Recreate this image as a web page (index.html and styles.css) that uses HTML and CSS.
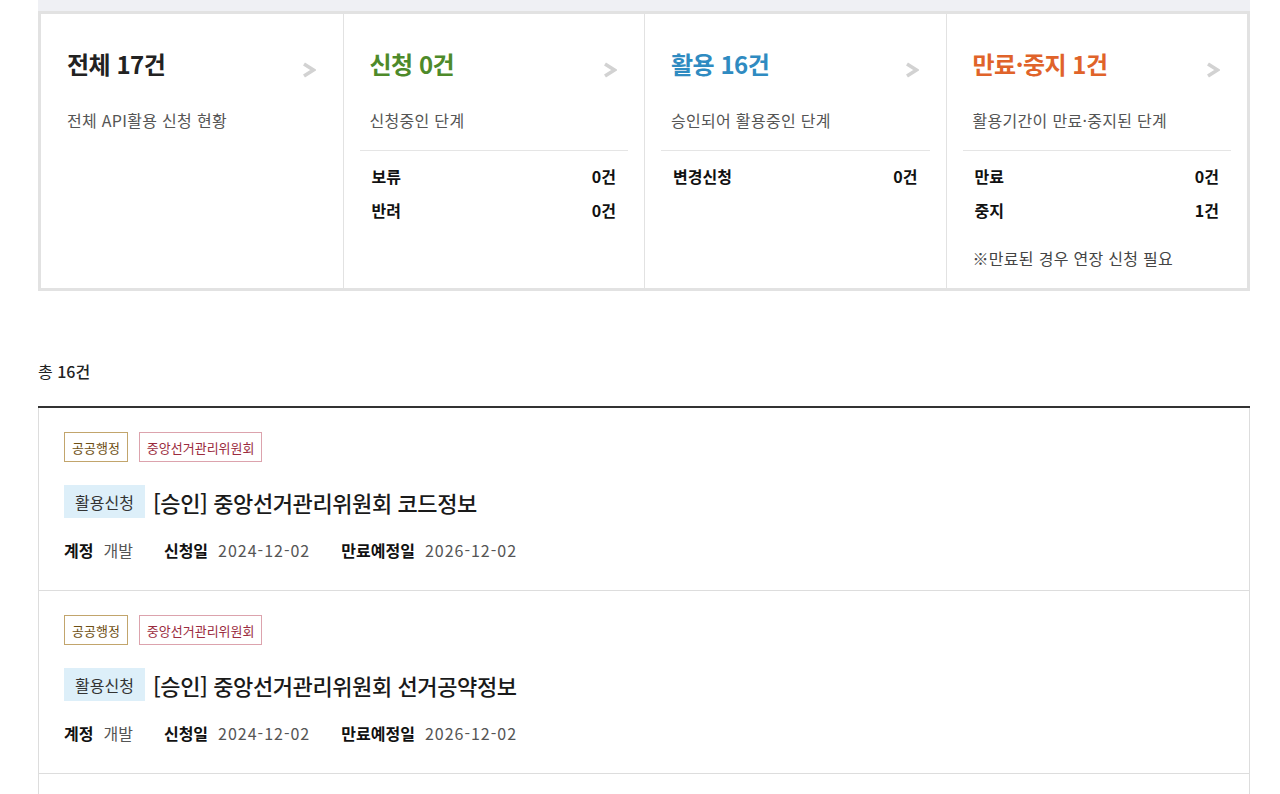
FILE: index.html
```html
<!DOCTYPE html>
<html lang="ko">
<head>
<meta charset="utf-8">
<title>활용신청 현황</title>
<link rel="stylesheet" href="styles.css">
</head>
<body>
<div class="wrap">
  <div class="topband"></div>
  <div class="summary">
    <div class="col">
      <div class="col-head"><h2 class="ttl ttl-all">전체 17건</h2><svg class="arrow" width="14" height="16" viewBox="0 0 14 16"><polyline points="2,2 11.5,8 2,14" fill="none" stroke="#d2d2d2" stroke-width="3.6"/></svg></div>
      <p class="desc">전체 API활용 신청 현황</p>
    </div>
    <div class="col">
      <div class="col-head"><h2 class="ttl ttl-req">신청 0건</h2><svg class="arrow" width="14" height="16" viewBox="0 0 14 16"><polyline points="2,2 11.5,8 2,14" fill="none" stroke="#d2d2d2" stroke-width="3.6"/></svg></div>
      <p class="desc">신청중인 단계</p>
      <div class="rows">
        <div class="row"><span>보류</span><span>0건</span></div>
        <div class="row"><span>반려</span><span>0건</span></div>
      </div>
    </div>
    <div class="col">
      <div class="col-head"><h2 class="ttl ttl-use">활용 16건</h2><svg class="arrow" width="14" height="16" viewBox="0 0 14 16"><polyline points="2,2 11.5,8 2,14" fill="none" stroke="#d2d2d2" stroke-width="3.6"/></svg></div>
      <p class="desc">승인되어 활용중인 단계</p>
      <div class="rows">
        <div class="row"><span>변경신청</span><span>0건</span></div>
      </div>
    </div>
    <div class="col">
      <div class="col-head"><h2 class="ttl ttl-end">만료·중지 1건</h2><svg class="arrow" width="14" height="16" viewBox="0 0 14 16"><polyline points="2,2 11.5,8 2,14" fill="none" stroke="#d2d2d2" stroke-width="3.6"/></svg></div>
      <p class="desc">활용기간이 만료·중지된 단계</p>
      <div class="rows">
        <div class="row"><span>만료</span><span>0건</span></div>
        <div class="row"><span>중지</span><span>1건</span></div>
      </div>
      <p class="note">※만료된 경우 연장 신청 필요</p>
    </div>
  </div>

  <p class="total">총 <b>16건</b></p>

  <ul class="list">
    <li class="item">
      <div class="tags"><span class="tag tag-cat">공공행정</span><span class="tag tag-org">중앙선거관리위원회</span></div>
      <div class="item-title"><span class="badge">활용신청</span><span class="name">[승인] 중앙선거관리위원회 코드정보</span></div>
      <div class="meta">
        <span class="m"><b>계정</b>개발</span>
        <span class="m"><b>신청일</b><span class="d">2024-12-02</span></span>
        <span class="m"><b>만료예정일</b><span class="d">2026-12-02</span></span>
      </div>
    </li>
    <li class="item">
      <div class="tags"><span class="tag tag-cat">공공행정</span><span class="tag tag-org">중앙선거관리위원회</span></div>
      <div class="item-title"><span class="badge">활용신청</span><span class="name">[승인] 중앙선거관리위원회 선거공약정보</span></div>
      <div class="meta">
        <span class="m"><b>계정</b>개발</span>
        <span class="m"><b>신청일</b><span class="d">2024-12-02</span></span>
        <span class="m"><b>만료예정일</b><span class="d">2026-12-02</span></span>
      </div>
    </li>
    <li class="item item-empty"></li>
  </ul>
</div>
</body>
</html>
```

FILE: styles.css
```css
* { box-sizing: border-box; }
html, body { margin: 0; padding: 0; background: #fff; }
body {
  font-family: "Noto Sans CJK KR", "Noto Sans", sans-serif;
  color: #222;
  font-size: 16px;
}
.wrap {
  width: 1212px;
  margin-left: 38px;
}
.topband {
  height: 11px;
  background: #eff0f4;
}
.summary {
  display: grid;
  grid-template-columns: repeat(4, 1fr);
  border: 3px solid #e2e2e2;
  height: 280px;
}
.col {
  padding: 0 16px;
  border-left: 1px solid #e2e2e2;
}
.col:first-child { border-left: 0; }
.col-head {
  display: flex;
  justify-content: space-between;
  align-items: flex-start;
  padding: 32px 10px 0 10px;
  height: 76px;
}
.ttl {
  margin: 0;
  font-size: 24px;
  font-weight: 700;
  line-height: 36px;
  letter-spacing: -0.5px;
}
.ttl-all { color: #222; }
.ttl-req { color: #4e8a2a; }
.ttl-use { color: #2f8bc1; }
.ttl-end { color: #e0632a; }
.arrow {
  display: block;
  margin-top: 16px;
  margin-right: 1px;
}
.desc {
  margin: 0;
  padding: 18px 10px 0 10px;
  font-size: 16px;
  line-height: 24px;
  color: #555;
  height: 60px;
  letter-spacing: 0.3px;
}
.rows {
  border-top: 1px solid #e5e5e5;
  padding: 13px 12px 0 12px;
}
.row {
  display: flex;
  justify-content: space-between;
  font-weight: 700;
  font-size: 16px;
  line-height: 24px;
  margin-bottom: 10px;
  color: #111;
}
.note {
  margin: 24px 0 0 0;
  padding: 0 10px;
  font-size: 16px;
  line-height: 24px;
  color: #444;
  letter-spacing: 0.3px;
}
.total {
  margin: 0;
  padding-top: 68px;
  height: 115px;
  font-size: 16px;
  line-height: 24px;
  color: #222;
}
.total b { font-weight: 500; }
.list {
  list-style: none;
  margin: 0;
  padding: 0;
  border-top: 2px solid #333;
}
.item {
  border: 1px solid #dddddd;
  border-top: 0;
  height: 183px;
  padding: 24px 25px 0 25px;
}
.item-empty { height: 40px; }
.tags {
  display: flex;
  gap: 11px;
  height: 30px;
}
.tag {
  display: inline-flex;
  align-items: center;
  height: 30px;
  padding: 0 7px;
  font-size: 13px;
  border: 1px solid;
  background: #fff;
}
.tag-cat { border-color: #c2a56c; color: #6e4f14; }
.tag-org { border-color: #dca3ad; color: #9b2c3e; }
.item-title {
  display: flex;
  align-items: center;
  gap: 8px;
  margin-top: 23px;
  height: 33px;
}
.badge {
  display: inline-flex;
  align-items: center;
  height: 33px;
  padding: 0 11px;
  background: #ddeff9;
  color: #333;
  font-size: 16px;
}
.name {
  font-size: 22px;
  font-weight: 500;
  color: #1a1a1a;
  letter-spacing: -0.4px;
}
.meta {
  display: flex;
  gap: 31px;
  margin-top: 20px;
  font-size: 16px;
  line-height: 24px;
  color: #555;
}
.meta b {
  font-weight: 700;
  color: #111;
  margin-right: 10px;
}
.meta .d { letter-spacing: 1px; }
```
